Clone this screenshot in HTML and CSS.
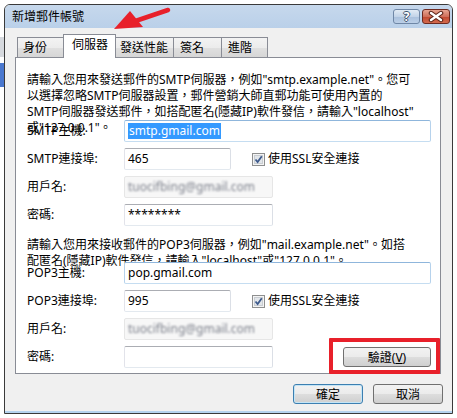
FILE: index.html
```html
<!DOCTYPE html>
<html lang="zh-Hant">
<head>
    <meta charset="UTF-8">
    <meta name="viewport" content="width=device-width, initial-scale=1.0">
    <title>新增郵件帳號</title>
    <link rel="stylesheet" href="styles.css">
</head>
<body>
    <div class="screen">
        <div class="desk-edge">
            <span class="edge-gray"></span>
            <span class="edge-blue"></span>
        </div>

        <div class="window">
            <div class="titlebar">
                <span class="title">新增郵件帳號</span>
                <div class="caption-btns">
                    <span class="cap-btn help">?</span>
                    <span class="cap-btn close">
                        <svg width="26" height="13" viewBox="0 0 26 13">
                            <path d="M8 3 L18 10 M18 3 L8 10" stroke="#5b2418" stroke-width="4.5" stroke-linecap="round"/>
                            <path d="M8 3 L18 10 M18 3 L8 10" stroke="#fff" stroke-width="2.4" stroke-linecap="round"/>
                        </svg>
                    </span>
                </div>
            </div>

            <div class="client">
                <div class="tabs">
                    <div class="tab">身份</div>
                    <div class="tab active">伺服器</div>
                    <div class="tab">發送性能</div>
                    <div class="tab">簽名</div>
                    <div class="tab">進階</div>
                </div>

                <div class="panel">
                    <p class="note note-smtp">請輸入您用來發送郵件的SMTP伺服器，例如"smtp.example.net"。您可<br>以選擇忽略SMTP伺服器設置，郵件營銷大師直郵功能可使用內置的<br>SMTP伺服器發送郵件，如搭配匿名(隱藏IP)軟件發信，請輸入"localhost"<br>或"127.0.0.1"。</p>

                    <div class="row">
                        <span class="label">SMTP主機:</span>
                        <div class="field wide focus"><span class="selected">smtp.gmail.com</span></div>
                    </div>
                    <div class="row">
                        <span class="label">SMTP連接埠:</span>
                        <div class="field port">465</div>
                        <span class="check"><svg width="13" height="13" viewBox="0 0 13 13"><rect x="0.5" y="0.5" width="12" height="12" fill="#f4f4f4" stroke="#8e8f8f"/><rect x="2.5" y="2.5" width="8" height="8" fill="#e2e6ea" stroke="#c9cdd2"/><path d="M3.5 6.5 L5.6 9 L9.8 3.2" fill="none" stroke="#3d5a8c" stroke-width="1.8"/></svg></span>
                        <span class="check-text">使用SSL安全連接</span>
                    </div>
                    <div class="row">
                        <span class="label">用戶名:</span>
                        <div class="field short masked"><span class="blur">tuocifbing@gmail.com</span></div>
                    </div>
                    <div class="row">
                        <span class="label">密碼:</span>
                        <div class="field short">********</div>
                    </div>

                    <p class="note note-pop">請輸入您用來接收郵件的POP3伺服器，例如"mail.example.net"。如搭<br>配匿名(隱藏IP)軟件發信，請輸入"localhost"或"127.0.0.1"。</p>

                    <div class="row">
                        <span class="label">POP3主機:</span>
                        <div class="field wide focus">pop.gmail.com</div>
                    </div>
                    <div class="row">
                        <span class="label">POP3連接埠:</span>
                        <div class="field port">995</div>
                        <span class="check"><svg width="13" height="13" viewBox="0 0 13 13"><rect x="0.5" y="0.5" width="12" height="12" fill="#f4f4f4" stroke="#8e8f8f"/><rect x="2.5" y="2.5" width="8" height="8" fill="#e2e6ea" stroke="#c9cdd2"/><path d="M3.5 6.5 L5.6 9 L9.8 3.2" fill="none" stroke="#3d5a8c" stroke-width="1.8"/></svg></span>
                        <span class="check-text">使用SSL安全連接</span>
                    </div>
                    <div class="row">
                        <span class="label">用戶名:</span>
                        <div class="field short masked"><span class="blur">tuocifbing@gmail.com</span></div>
                    </div>
                    <div class="row">
                        <span class="label">密碼:</span>
                        <div class="field short"></div>
                        <button class="btn verify">驗證(<u>V</u>)</button>
                    </div>
                </div>

                <div class="dialog-btns">
                    <button class="btn default">確定</button>
                    <button class="btn">取消</button>
                </div>
            </div>
        </div>

        <!-- annotations drawn over the screenshot -->
        <svg class="arrow" width="457" height="418" viewBox="0 0 457 418">
            <path d="M168 10 L134 21.5" stroke="#e8202a" stroke-width="4.5" stroke-linecap="round"/>
            <polygon points="114,29 130,11 143,27" fill="#e8202a"/>
        </svg>
        <div class="mark"></div>
    </div>
</body>
</html>
```

FILE: styles.css
```css
body {
    margin: 0;
    background: #fff;
    font-family: "Noto Sans", "Noto Sans CJK TC", sans-serif;
    font-size: 12px;
    color: #000;
}

.screen {
    position: relative;
    width: 457px;
    height: 418px;
    display: flex;
    align-items: flex-start;
    overflow: hidden;
}

/* bits of the desktop peeking out on the left */
.desk-edge {
    width: 4px;
    display: flex;
    flex-direction: column;
    padding-top: 37px;
}

.edge-gray {
    height: 20px;
    background: #d6d9de;
}

.edge-blue {
    height: 24px;
    margin-top: 6px;
    background: #4a78cf;
}

.window {
    box-sizing: border-box;
    width: 449px;
    height: 410px;
    margin-top: 4px;
    border: 1px solid #3a3a3a;
    border-radius: 6px 6px 0 0;
    background: #f0f0f0;
    display: flex;
    flex-direction: column;
}

.titlebar {
    height: 23px;
    display: flex;
    align-items: center;
    padding-left: 7px;
    background: linear-gradient(#c6d8ec, #bad0e9);
    border-radius: 5px 5px 0 0;
}

.title {
    flex: 1;
    line-height: 16px;
}

.caption-btns {
    display: flex;
    gap: 2px;
    align-self: flex-start;
    margin-top: 4px;
    margin-right: 2px;
}

.cap-btn {
    box-sizing: border-box;
    height: 15px;
    border-radius: 3px;
    display: flex;
    align-items: center;
    justify-content: center;
}

.help {
    width: 27px;
    border: 1px solid #6f87a6;
    background: linear-gradient(#e2ebf5, #c3d4e8 50%, #a9c0dc 51%, #bcd0e8);
    color: #fff;
    font-weight: bold;
    font-size: 12px;
    line-height: 13px;
    text-shadow: 1px 0 #3f546f, -1px 0 #3f546f, 0 1px #3f546f, 0 -1px #3f546f;
}

.close {
    width: 28px;
    border: 1px solid #6d2a20;
    background: linear-gradient(#e7a592, #d0705a 50%, #c0472f 51%, #d36a4f);
}

.client {
    flex: 1;
    padding: 7px 0 0 10px;
    border-bottom: 2px solid #b5d3ef;
}

.tabs {
    display: flex;
    align-items: flex-end;
    height: 22px;
    margin-left: 2px;
}

.tab {
    box-sizing: border-box;
    height: 20px;
    padding-left: 5px;
    border: 1px solid #898c95;
    border-bottom: none;
    margin-left: -1px;
    line-height: 19px;
    background: linear-gradient(#f3f3f3, #ececec 50%, #e0e0e0 51%, #d6d6d6);
}

.tab:first-child {
    margin-left: 0;
    width: 47px;
}

.tab:nth-child(3) {
    width: 59px;
    padding-left: 4px;
}

.tab:nth-child(4) {
    width: 49px;
    padding-left: 6px;
}

.tab:nth-child(5) {
    width: 47px;
    padding-left: 6px;
}

.tab.active {
    position: relative;
    z-index: 2;
    width: 53px;
    height: 24px;
    margin-bottom: -1px;
    padding-left: 8px;
    line-height: 19px;
    background: #fff;
}

.panel {
    box-sizing: border-box;
    width: 426px;
    height: 317px;
    border: 1px solid #898c95;
    background: #fff;
    padding: 14px 0 0 11px;
    display: flex;
    flex-direction: column;
}

.note {
    margin: 0;
    line-height: 16px;
    white-space: nowrap;
}

.note-smtp {
    height: 48px;
}

.note-pop {
    height: 25px;
    margin-top: 11px;
}

.row {
    display: flex;
    align-items: center;
    height: 22px;
    margin-top: 6px;
}

.note + .row {
    margin-top: 0;
}

.label {
    width: 97px;
    flex-shrink: 0;
    line-height: 16px;
}

.field {
    box-sizing: border-box;
    z-index: 1;
    height: 22px;
    padding-left: 3px;
    border: 1px solid;
    border-color: #abadb3 #dbdfe6 #e3e9ef #e2e3ea;
    border-radius: 2px;
    background: #fff;
    line-height: 20px;
    overflow: hidden;
    white-space: nowrap;
}

.field.focus {
    border-color: #8fb6dc #b6d2ec #c5ddf1 #b6d2ec;
}

.wide {
    width: 307px;
}

.port {
    width: 107px;
}

.short {
    width: 149px;
}

.masked {
    border-color: #e6e6e6;
    background: #f7f7f7;
}

.blur {
    color: #7b7f8a;
    filter: blur(1px);
}

.selected {
    display: inline-block;
    background: #3399ff;
    color: #fff;
    line-height: 16px;
    padding: 0 1px;
}

.check {
    display: flex;
    margin-left: 21px;
    margin-right: 3px;
}

.check-text {
    line-height: 16px;
}

.btn {
    box-sizing: border-box;
    height: 20px;
    width: 70px;
    padding: 0;
    border: 1px solid #707070;
    border-radius: 3px;
    background: linear-gradient(#f2f2f2, #ebebeb 50%, #dddddd 51%, #cfcfcf);
    font: inherit;
    color: #000;
    line-height: 17px;
}

.btn.default {
    border-color: #3c7fb1;
    box-shadow: inset 0 0 0 1px #c4e5f6;
}

.verify {
    width: 88px;
    margin-left: auto;
    margin-right: 9px;
}

.verify u {
    text-decoration-thickness: 1px;
}

.dialog-btns {
    display: flex;
    justify-content: flex-end;
    gap: 10px;
    margin-top: 10px;
    padding-right: 9px;
}

/* red annotations */
.arrow {
    position: absolute;
    top: 0;
    left: 0;
    pointer-events: none;
}

.mark {
    position: absolute;
    left: 329px;
    top: 338px;
    width: 103px;
    height: 28px;
    border: 4px solid #e8202a;
    border-radius: 1px;
    pointer-events: none;
}
```
